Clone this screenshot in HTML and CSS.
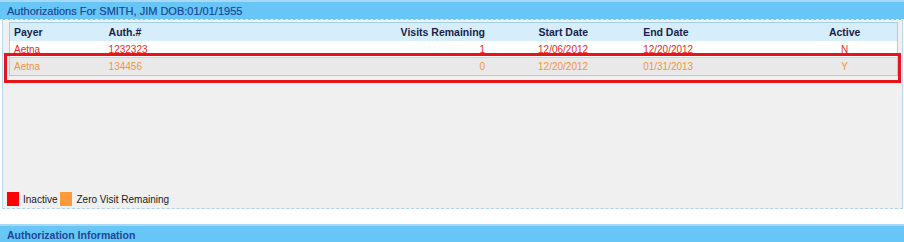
FILE: index.html
```html
<!DOCTYPE html>
<html>
<head>
<meta charset="utf-8">
<link rel="stylesheet" href="styles.css">
</head>
<body>
<div class="panel">
  <div class="bar"><span class="bar-title">Authorizations For SMITH, JIM DOB:01/01/1955</span></div>
  <div class="panel-body">
    <table class="grid">
      <colgroup>
        <col class="c1"><col class="c2"><col class="c3"><col class="c4"><col class="c5"><col class="c6">
      </colgroup>
      <thead>
        <tr>
          <th class="l">Payer</th>
          <th class="l">Auth.#</th>
          <th class="r">Visits Remaining</th>
          <th class="r">Start Date</th>
          <th class="e">End Date</th>
          <th class="c">Active</th>
        </tr>
      </thead>
      <tbody>
        <tr class="inactive">
          <td class="l">Aetna</td>
          <td class="l">1232323</td>
          <td class="r">1</td>
          <td class="r">12/06/2012</td>
          <td class="e">12/20/2012</td>
          <td class="c">N</td>
        </tr>
        <tr class="zero">
          <td class="l">Aetna</td>
          <td class="l">134456</td>
          <td class="r">0</td>
          <td class="r">12/20/2012</td>
          <td class="e">01/31/2013</td>
          <td class="c">Y</td>
        </tr>
      </tbody>
    </table>
    <div class="highlight"></div>
    <div class="legend">
      <span class="swatch red"></span><span class="legend-label">Inactive</span>
      <span class="swatch orange"></span><span class="legend-label">Zero Visit Remaining</span>
    </div>
  </div>
</div>
<div class="bar bar2"><span class="bar-title bold">Authorization Information</span></div>
</body>
</html>
```
FILE: styles.css
```css
html, body {
  margin: 0;
  padding: 0;
  background: #ffffff;
  font-family: "Liberation Sans", Arial, sans-serif;
}

.bar {
  height: 17px;
  background: #68c6f7;
  border-top: 2px solid #a6d9f6;
  border-bottom: 1px dashed #d8eefc;
  display: flex;
  align-items: center;
  padding-left: 7px;
}

.bar-title {
  color: #1a4898;
  font-size: 11px;
  line-height: 12px;
  -webkit-text-stroke: 0.2px #1a4898;
}

.bar-title.bold {
  font-weight: bold;
  font-size: 10.5px;
  -webkit-text-stroke: 0;
}

.panel-body {
  position: relative;
  margin: 0 1px 0 2px;
  border-left: 1px solid #b5daf2;
  border-right: 1px solid #b5daf2;
  border-bottom: 1px dashed #a9d3ef;
  background: #f0f0f0;
  padding: 2px 4px 2px 6px;
  height: 184px;
  display: flex;
  flex-direction: column;
  justify-content: space-between;
}

.grid {
  width: 889px;
  border-collapse: collapse;
  border: 1px solid #a6cfec;
  table-layout: fixed;
  font-size: 10px;
}

.c1 { width: 95px; }
.c2 { width: 287px; }
.c3 { width: 99px; }
.c4 { width: 103px; }
.c5 { width: 200px; }
.c6 { width: 103px; }

.grid th {
  background: #d6edfc;
  color: #1a1f4a;
  font-weight: bold;
  font-size: 10.5px;
  height: 18px;
  padding: 0 6px 0 4px;
}

.grid td {
  height: 16px;
  padding: 0 6px 0 4px;
}

.grid .l { text-align: left; }
.grid .r { text-align: right; }
.grid .c { text-align: center; }
.grid .e { text-align: left; padding-left: 49px; }

.inactive td {
  background: #ffffff;
  color: #e8271f;
}

.zero td {
  background: #e9e9e9;
  color: #f2953d;
  height: 17px;
  border-top: 1px solid #b9d9ef;
}

.highlight {
  position: absolute;
  left: 1px;
  top: 33px;
  width: 891px;
  height: 24px;
  border: 3px solid #e8141b;
}

.legend {
  display: flex;
  align-items: center;
  font-size: 10px;
  color: #1a1a1a;
  margin-left: -2px;
}

.swatch {
  width: 12px;
  height: 14px;
  display: inline-block;
}

.swatch.red { background: #ff0000; }
.swatch.orange { background: #ff9a3a; margin-left: 3px; }

.legend-label {
  margin-left: 4px;
}

.bar2 {
  margin-top: 15px;
}
```
